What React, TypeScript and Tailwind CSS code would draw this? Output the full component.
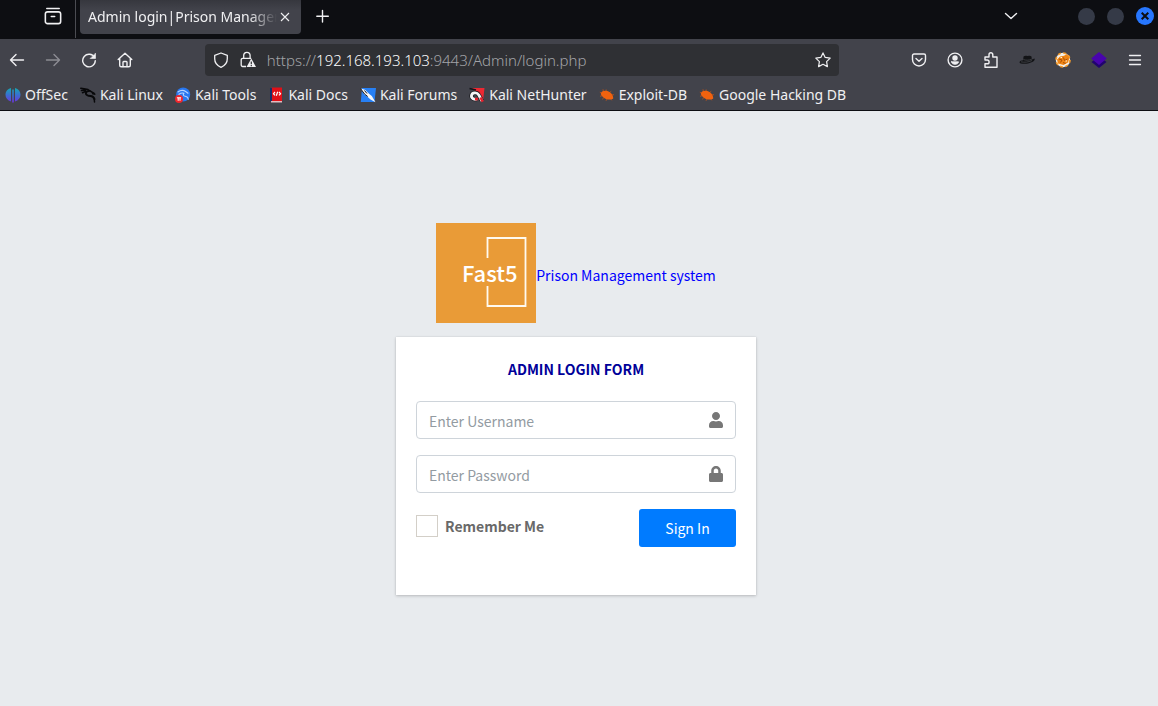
import type { ReactNode } from "react";

function Stroke({ children, size = 16, className = "" }: { children: ReactNode; size?: number; className?: string }) {
  return (
    <svg
      width={size}
      height={size}
      viewBox="0 0 16 16"
      fill="none"
      stroke="currentColor"
      strokeWidth="1.4"
      strokeLinecap="round"
      strokeLinejoin="round"
      className={className}
      aria-hidden="true"
    >
      {children}
    </svg>
  );
}

function ToolButton({ label, children, disabled = false }: { label: string; children: ReactNode; disabled?: boolean }) {
  return (
    <button
      type="button"
      aria-label={label}
      disabled={disabled}
      className="flex h-8 w-9 shrink-0 items-center justify-center text-[#f0f0f2] disabled:text-[#8c8d93]"
    >
      {children}
    </button>
  );
}

function OffSecIcon() {
  return (
    <svg width="16" height="16" viewBox="0 0 16 16" aria-hidden="true">
      <defs>
        <linearGradient id="offsec" x1="0" y1="0" x2="0" y2="16" gradientUnits="userSpaceOnUse">
          <stop offset="0" stopColor="#10b0b0" />
          <stop offset="0.5" stopColor="#3a6fd0" />
          <stop offset="1" stopColor="#7030e0" />
        </linearGradient>
      </defs>
      <path fill="url(#offsec)" d="M6 1v13.500C2.500 13.500.5 10.800.5 7.800S2.500 1.800 6 1zM10 1v13.500c3.500-1 5.500-3.700 5.500-6.700S13.500 1.800 10 1zM7.200 2.500h1.600v13H7.200z" />
    </svg>
  );
}

function LinuxIcon() {
  return (
    <svg width="16" height="16" viewBox="0 0 16 16" fill="none" stroke="#08080a" strokeLinecap="round" strokeLinejoin="round" aria-hidden="true">
      <path strokeWidth="1.500" d="M.8 1.200 4 1.800l4 .7 2.500 1.800M1.500 3.600l4-.6M2.500 5.800 6 4.200" />
      <path strokeWidth="2" d="M8.500 4c-2 .2-3 1.500-2.500 3s2.500 1.900 4.500 2.100 3.300 1.300 4 3.100" />
      <path strokeWidth="1.500" d="m10 4 3.500 1.800 1.300 1.500M12 5l1.200 2M14.200 11.500l.3 3.500" />
    </svg>
  );
}

function ToolsIcon() {
  return (
    <svg width="16" height="16" viewBox="0 0 16 16" aria-hidden="true">
      <circle cx="8.200" cy="7.500" r="7" fill="#2877f0" />
      <g fill="none" stroke="#b9d4ff" strokeLinecap="round" strokeWidth="1.100">
        <path d="M3 5c2.500-2 5.500-2 8-.3l2 1.500M4 7.300c2-1.500 3.500-1.600 5-1" />
        <path d="M8.500 6.500c-.8 2 .7 2.700 2.500 3s2.200 1.500 2.300 2.800" />
      </g>
      <circle cx="4" cy="12" r="4" fill="#f0262c" />
      <path d="M1.900 10.700h4.200M3.200 10.700v3M5 10.700v3" stroke="#fff" strokeWidth="1.100" />
    </svg>
  );
}

function DocsIcon() {
  return (
    <svg width="16" height="16" viewBox="0 0 16 16" aria-hidden="true">
      <path d="M3.500.5h10.500v14H3.500z" fill="#e01018" />
      <path d="M2 1h2v13H2z" fill="#18306a" />
      <path d="M3 14h11v1.500H3z" fill="#e3bcc0" />
      <path
        d="M7 5 5.500 6.700 7 8.300M11 5l1.500 1.700L11 8.300M9.700 4.700 8.300 8.800"
        fill="none"
        stroke="#fff"
        strokeWidth="1.200"
      />
    </svg>
  );
}

function ForumsIcon() {
  return (
    <svg width="16" height="16" viewBox="0 0 16 16" aria-hidden="true">
      <path d="M2 1h14l-1.500 14H.8z" fill="#2780f5" />
      <path d="M.5 1.500 5 2.800l4 4 2.800 2.200 3.700 6.200-5-2.700-3.300-3L4 7z" fill="#f7f8fa" />
      <path d="m.5 1.500 4 5.500 3.200 2.500M4.500 3.500l2.500 3" fill="none" stroke="#15171d" strokeWidth="1" />
    </svg>
  );
}

function NetHunterIcon() {
  return (
    <svg width="16" height="16" viewBox="0 0 16 16" aria-hidden="true">
      <path d="M3 1h12.500L14 14 9 7z" fill="#ed2832" />
      <path d="M.5 1.500 7 3" stroke="#15161a" strokeWidth="1.500" />
      <path d="M13 14 9.800 8C7.800 4.800 3 5.500 2.500 8.500s3 4.300 5.500 3.500" fill="none" stroke="#17181c" strokeWidth="4.200" />
      <path d="M13 14 9.800 8C7.800 4.800 3 5.500 2.500 8.500s3 4.300 5.500 3.500" fill="none" stroke="#f5f5f6" strokeWidth="2.800" />
      <path d="m11.500 10.500 2.300 4.200M6 12.300l3-.4" stroke="#e81f2b" strokeWidth="2.600" />
    </svg>
  );
}

function BugIcon() {
  return (
    <svg width="16" height="16" viewBox="0 0 16 16" aria-hidden="true">
      <path
        d="M3 6.500.8 5.200M4.500 5 4 2.300M7 5l.2-2.500M10 6l2.300-1.800M12 8l3-.3M4 8.500l-3 .8M5.500 10l-2.300 2.300M8.500 11.300 7 13.800M11.500 11.500l1.200 1.800"
        stroke="#b4511d"
        strokeWidth="0.900"
        fill="none"
      />
      <path d="M2 6C3 3.500 7.500 3 10.500 5s3.800 4.500 3.700 6.500c-1.700 1.500-6.200 1.500-9-.5S1.500 7.500 2 6z" fill="#f0620f" />
    </svg>
  );
}

const bookmarks: { label: string; icon: ReactNode }[] = [
  { label: "OffSec", icon: <OffSecIcon /> },
  { label: "Kali Linux", icon: <LinuxIcon /> },
  { label: "Kali Tools", icon: <ToolsIcon /> },
  { label: "Kali Docs", icon: <DocsIcon /> },
  { label: "Kali Forums", icon: <ForumsIcon /> },
  { label: "Kali NetHunter", icon: <NetHunterIcon /> },
  { label: "Exploit-DB", icon: <BugIcon /> },
  { label: "Google Hacking DB", icon: <BugIcon /> },
];

function TabBar() {
  return (
    <div className="flex h-[39px] items-start bg-[#0d0e12] text-[#f0f0f2]">
      <button type="button" aria-label="Recent browsing" className="flex h-8 w-[75px] shrink-0 items-center justify-end pr-[13px]">
        <Stroke size={18}>
          <rect x="1.200" y="4.300" width="13.600" height="10.500" rx="2" />
          <path d="M2.500 1.400h11M6.500 8.500h3" />
        </Stroke>
      </button>
      <div className="mr-1 h-[38px] w-px shrink-0 bg-[#4b4c52]" />
      <div className="flex h-[34px] w-[221px] shrink-0 items-center rounded-b-[4px] bg-linear-to-b from-[#36373e] to-[#42434b] to-30% pr-2 pl-2">
        <span className="min-w-0 flex-1 overflow-hidden whitespace-nowrap mask-r-from-85% mask-r-to-100%">
          Admin login|Prison Managem
        </span>
        <button type="button" aria-label="Close tab" className="flex size-4 shrink-0 items-center justify-center">
          <svg width="10" height="10" viewBox="0 0 10 10" stroke="currentColor" strokeWidth="1.100" aria-hidden="true">
            <path d="m1 1 8 8M9 1 1 9" />
          </svg>
        </button>
      </div>
      <button type="button" aria-label="New tab" className="ml-1 flex h-8 w-9 shrink-0 items-center justify-center">
        <Stroke size={16}>
          <path d="M7.500 2.500v11.500M1.800 8.200h11.500" />
        </Stroke>
      </button>
      <div className="flex-1" />
      <button type="button" aria-label="List all tabs" className="mr-[49px] flex h-8 w-9 items-center justify-center">
        <Stroke size={16}>
          <path d="m2.500 5.500 5.500 5 5.500-5" />
        </Stroke>
      </button>
      <div className="flex h-8 items-center gap-3 pr-1">
        <button type="button" aria-label="Minimize" className="size-[17px] rounded-full bg-[#353a47]" />
        <button type="button" aria-label="Maximize" className="size-[17px] rounded-full bg-[#353a47]" />
        <button type="button" aria-label="Close window" className="flex size-[18px] items-center justify-center rounded-full bg-[#2777ff] text-[#0d0e12]">
          <svg width="8" height="8" viewBox="0 0 8 8" stroke="currentColor" strokeWidth="2" aria-hidden="true">
            <path d="m.7.7 6.600 6.600M7.300.7.7 7.300" />
          </svg>
        </button>
      </div>
    </div>
  );
}

function AddressBar() {
  return (
    <div className="flex h-8 min-w-0 flex-[10] items-center rounded-[4px] bg-[#2f3034] px-2 text-[#f0f0f2]">
      <Stroke className="shrink-0">
        <path strokeWidth="1.300" d="M8 1 1.700 3.300v3.500C1.700 10.800 4.300 13.800 8 15.300c3.700-1.500 6.300-4.500 6.300-8.500V3.300z" />
      </Stroke>
      <svg width="16" height="17" viewBox="0 0 16 17" fill="none" className="ml-[11px] shrink-0" aria-hidden="true">
        <path
          d="M3.700 7.300V4.500a3.200 3.200 0 0 1 6.400 0v2.800M6 15.500H2.700c-.8 0-1.500-.7-1.500-1.500V8.800c0-.8.7-1.500 1.500-1.500h8.500"
          stroke="currentColor"
          strokeWidth="1.300"
        />
        <path d="m11.300 7.500 4.700 8.600H6.600z" fill="currentColor" />
        <path d="M11.300 10.500v2.700M11.300 14v1.200" stroke="#2f3034" strokeWidth="1.200" />
      </svg>
      <span className="ml-[11px] min-w-0 flex-1 overflow-hidden text-[15px] font-light whitespace-nowrap text-[#a3a4a8]">
        https://<span className="text-white">192.168.193.103</span>:9443/Admin/login.php
      </span>
      <button type="button" aria-label="Bookmark this page" className="shrink-0">
        <Stroke>
          <path strokeWidth="1.200" d="m8 .9 2.200 4.500 5 .7-3.600 3.500.8 5L8 12.300l-4.400 2.300.8-5L.8 6.100l5-.7z" />
        </Stroke>
      </button>
    </div>
  );
}

function NavBar() {
  return (
    <div className="flex h-[41px] items-center bg-[#42434b] pr-[5px]">
      <div className="-ml-px flex">
        <ToolButton label="Back">
          <Stroke><path d="M14.500 8H1.500M7 2.500 1.500 8 7 13.500" /></Stroke>
        </ToolButton>
        <ToolButton label="Forward" disabled>
          <Stroke><path d="M1.500 8h13M9 2.500 14.500 8 9 13.500" /></Stroke>
        </ToolButton>
        <ToolButton label="Reload">
          <Stroke>
            <path d="M13.500 5.500A6.300 6.300 0 1 0 14.300 8.600" />
            <path d="M14.500 1.500v5h-5z" fill="currentColor" strokeWidth="0.600" />
          </Stroke>
        </ToolButton>
        <ToolButton label="Home">
          <Stroke>
            <path d="m1.200 7.500 6.800-6.300 6.800 6.300M2.700 6.500v6.800c0 .8.600 1.500 1.500 1.500h7.600c.9 0 1.500-.7 1.500-1.500V6.500" />
            <path d="M6 14.500v-4.200c0-.5.400-.8.800-.8h2.400c.4 0 .8.300.8.800v4.200" />
          </Stroke>
        </ToolButton>
      </div>
      <div className="flex-1" />
      <AddressBar />
      <div className="flex-1" />
      <div className="flex">
        <ToolButton label="Save to Pocket">
          <Stroke>
            <path d="M3 2h10c.8 0 1.500.7 1.500 1.500v4a6.500 6.500 0 0 1-13 0v-4C1.500 2.700 2.200 2 3 2z" />
            <path d="M5 6.500 8 9.300l3-2.800" />
          </Stroke>
        </ToolButton>
        <ToolButton label="Account">
          <Stroke>
            <circle cx="8" cy="8" r="6.900" />
            <circle cx="8" cy="6" r="2" fill="currentColor" />
            <path d="M4.500 9.800h7c0 1.500-1.500 2.500-3.500 2.500s-3.500-1-3.500-2.500z" fill="currentColor" strokeWidth="0.800" />
          </Stroke>
        </ToolButton>
        <ToolButton label="Extensions">
          <Stroke>
            <path d="M2 15.200h12V5H9.800V2.700a1.900 1.900 0 0 0-3.800 0V5H2v3h2.200a1.900 1.900 0 0 1 0 3.800H2z" />
          </Stroke>
        </ToolButton>
        <ToolButton label="Hat extension">
          <svg width="16" height="16" viewBox="0 0 16 16" aria-hidden="true">
            <path
              d="M.5 10.200c0-1.200 2-1.900 3.700-2L4.500 4.500c1.500-1.200 2.500-.7 4-.6s2.700-.6 4 .6l.3 3 2.700-1c1.200 2.200-3 4.700-8 5.200-4 .4-7-.2-7-1.500z"
              fill="#131417"
            />
            <path d="M4.500 7.500c2 1 5.500.9 8.200-.2M2 9.800c3 .8 7.500.5 11-1.300" stroke="#55575d" strokeWidth="0.600" fill="none" />
          </svg>
        </ToolButton>
        <ToolButton label="Fox extension">
          <svg width="16" height="16" viewBox="0 0 16 16" aria-hidden="true">
            <circle cx="8" cy="8" r="7.200" fill="#f2efe8" />
            <circle cx="8" cy="8" r="7" fill="none" stroke="#f39a2a" strokeWidth="1.600" strokeDasharray="3 2.500" />
            <path d="M2 7.500 5 4.500l4-.7 3-1.800 2.500 4-1.500 4.500L8.500 13 3 11.500z" fill="#ee8413" />
            <path d="m4 7 3 1L5.500 10.500M8.500 5.500l1 3 3-1.500M8 10.500l2.500 1" stroke="#a84f08" fill="none" />
            <path d="M5.500 5.500h1.500M10.500 9H12" stroke="#fff3df" />
          </svg>
        </ToolButton>
        <ToolButton label="Layers extension">
          <svg width="16" height="16" viewBox="0 0 16 16" aria-hidden="true">
            <path d="m.5 10 2.500-2h10l2.500 2L8 16z" fill="#21046e" />
            <path d="m8 0 7.800 6.500L8 13 .2 6.500z" fill="#4904ae" />
          </svg>
        </ToolButton>
        <ToolButton label="Application menu">
          <Stroke><path strokeWidth="1.300" d="M2.500 3.500h11M2.500 8h11M2.500 12.500h11" /></Stroke>
        </ToolButton>
      </div>
    </div>
  );
}

function BookmarksBar() {
  return (
    <nav aria-label="Bookmarks" className="flex h-[31px] items-center gap-3 overflow-hidden border-b border-[#0d0e12] bg-[#42434b] pl-[5px] text-[#f0f0f2]">
      {bookmarks.map((b) => (
        <a key={b.label} href="#" className="flex shrink-0 items-center gap-1 whitespace-nowrap">
          {b.icon}
          {b.label}
        </a>
      ))}
    </nav>
  );
}

function Logo() {
  return (
    <svg width="100" height="100" viewBox="0 0 100 100" role="img" aria-label="Fast5">
      <path d="M0 0h100v100H0z" fill="#e99b37" />
      <path d="M51.500 35V15H89.500V83H51.500V63" fill="none" stroke="#fffaf0" strokeWidth="1.800" />
      <text x="26" y="59" fill="#fff" fontSize="22" fontWeight="500" fontFamily="'Noto Sans CJK SC', sans-serif">
        Fast5
      </text>
    </svg>
  );
}

function LoginForm() {
  const field =
    "h-[38px] w-full rounded-[4px] border border-[#ced4da] bg-white pt-[2px] pr-10 pl-3 text-[#495057] outline-none placeholder:text-[#939ba2] placeholder:opacity-100 focus:border-[#80bdff]";
  return (
    <form
      onSubmit={(e) => e.preventDefault()}
      className="w-full bg-white px-5 pt-5 pb-12 shadow-[0_0_1px_rgba(0,0,0,0.13),0_1px_3px_rgba(0,0,0,0.2)]"
    >
      <h1 className="mb-5 text-center leading-6 font-bold text-[#000099]">ADMIN LOGIN FORM</h1>
      <div className="relative mb-4">
        <input type="text" aria-label="Username" placeholder="Enter Username" className={field} />
        <svg width="14" height="16" viewBox="0 0 448 512" fill="#777" className="pointer-events-none absolute top-[11px] right-[13px]" aria-hidden="true">
          <path d="M224 256c70.700 0 128-57.300 128-128S294.700 0 224 0 96 57.300 96 128s57.300 128 128 128zm89.600 32h-16.700c-22.200 10.200-46.900 16-72.900 16s-50.600-5.800-72.900-16h-16.700C60.200 288 0 348.200 0 422.400V464c0 26.500 21.500 48 48 48h352c26.500 0 48-21.500 48-48v-41.600c0-74.200-60.200-134.400-134.400-134.400z" />
        </svg>
      </div>
      <div className="relative mb-4">
        <input type="password" aria-label="Password" placeholder="Enter Password" className={field} />
        <svg width="14" height="16" viewBox="0 0 448 512" fill="#777" className="pointer-events-none absolute top-[11px] right-[13px]" aria-hidden="true">
          <path d="M400 224h-24v-72C376 68.200 307.800 0 224 0S72 68.200 72 152v72H48c-26.500 0-48 21.500-48 48v192c0 26.500 21.500 48 48 48h352c26.500 0 48-21.500 48-48V272c0-26.500-21.500-48-48-48zm-104 0H152v-72c0-39.700 32.300-72 72-72s72 32.300 72 72v72z" />
        </svg>
      </div>
      <div className="flex items-start justify-between">
        <label className="flex items-center gap-[7px] pt-[6px] leading-[22px] font-bold text-[#696969]">
          <input type="checkbox" className="size-[22px] appearance-none border border-[#d3cfc8] bg-white checked:bg-[#007bff]" />
          Remember Me
        </label>
        <button type="submit" className="h-[38px] w-[97px] rounded-[3px] bg-[#007bff] pt-[2px] text-white">
          Sign In
        </button>
      </div>
    </form>
  );
}

export default function App() {
  return (
    <div className="flex min-h-screen flex-col bg-[#e9ecef]">
      <header className="font-['Noto_Sans',sans-serif] text-[14px] leading-5">
        <TabBar />
        <NavBar />
        <BookmarksBar />
      </header>
      <main className="flex flex-1 items-center justify-center bg-[#e8ebee] pr-[6px] font-['Noto_Sans_CJK_SC',sans-serif] text-[14px]">
        <div className="w-[360px]">
          <a href="#" className="mb-[14px] flex items-center justify-center text-[#0000ff]">
            <Logo />
            <span className="pt-[6px]">Prison Management system</span>
          </a>
          <LoginForm />
        </div>
      </main>
    </div>
  );
}
